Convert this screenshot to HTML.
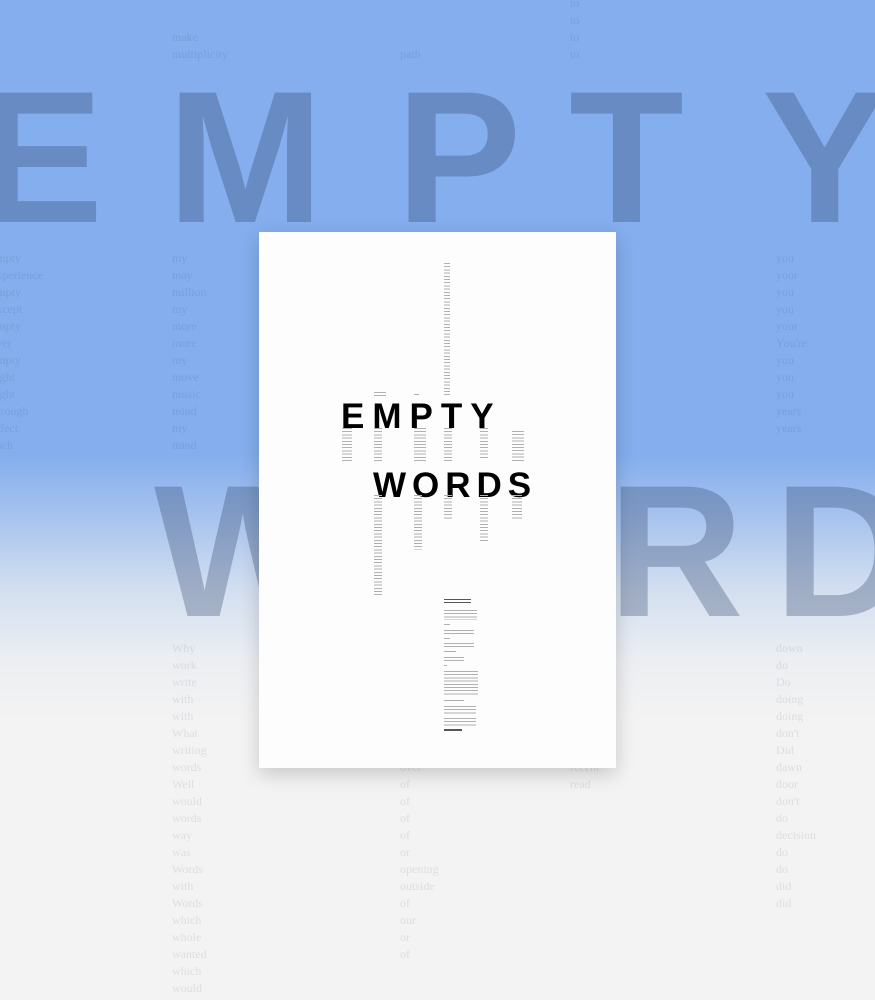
<!DOCTYPE html>
<html><head><meta charset="utf-8"><style>
*{margin:0;padding:0}
body{width:875px;height:1000px;overflow:hidden;position:relative;
background:linear-gradient(#84aeed 0,#84aeed 455px,#a9c4ee 520px,#d3dff0 590px,#eceef2 660px,#f3f3f3 720px,#f3f3f3 1000px);
font-family:"Liberation Serif",serif}
.big{position:absolute;font-family:"Liberation Sans",sans-serif;font-weight:bold;font-size:188px;line-height:1;color:rgba(40,60,100,0.3)}
.c{position:absolute;font-size:12px;line-height:17px;color:rgba(20,30,60,0.1);white-space:pre}
.poster{position:absolute;left:259px;top:232px;width:357px;height:536px;background:#fdfdfd;box-shadow:0 6px 18px rgba(0,0,0,0.18)}
.t{position:absolute;font-family:"Liberation Sans",sans-serif;font-weight:bold;font-size:35px;line-height:1;color:#000;letter-spacing:8px}
.l{position:absolute;background:repeating-linear-gradient(#b0b0b0 0,#b0b0b0 1px,transparent 1px,transparent 3.2px)}
</style></head><body>
<div class="big" style="left:-22px;top:63px">E</div>
<div class="big" style="left:167px;top:63px">M</div>
<div class="big" style="left:396px;top:63px">P</div>
<div class="big" style="left:569px;top:63px">T</div>
<div class="big" style="left:762px;top:63px">Y</div>
<div class="big" style="left:154px;top:457px">W</div>
<div class="big" style="left:380px;top:457px">O</div>
<div class="big" style="left:608px;top:457px">R</div>
<div class="big" style="left:774px;top:457px">D</div>

<div class="c" style="left:172px;top:29px">make
multiplicity</div>
<div class="c" style="left:400px;top:46px">path</div>
<div class="c" style="left:570px;top:-5px">to
to
to
to</div>
<div class="c" style="left:-9px;top:250px">empty
experience
empty
except
empty
ever
empty
eight
eight
through
effect
each</div>
<div class="c" style="left:172px;top:250px">my
may
million
my
more
more
my
move
music
mind
my
mind</div>
<div class="c" style="left:776px;top:250px">you
your
you
you
your
You're
you
you
you
years
years</div>
<div class="c" style="left:172px;top:640px">Why
work
write
with
with
What
writing
words
Well
would
words
way
was
Words
with
Words
which
whole
wanted
which
would</div>
<div class="c" style="left:400px;top:759px">over
of
of
of
of
or
opening
outside
of
our
or
of</div>
<div class="c" style="left:570px;top:759px">recent
read</div>
<div class="c" style="left:776px;top:640px">down
do
Do
doing
doing
don't
Did
dawn
door
don't
do
decision
do
do
did
did</div>

<div class="poster">
<div class="l" style="left:185px;top:31px;width:6px;height:133px"></div>
<div class="l" style="left:115px;top:160px;width:12px;height:5px"></div>
<div class="l" style="left:155px;top:162px;width:5px;height:3px"></div>
<div class="t" style="left:82px;top:167px">EMPTY</div>
<div class="l" style="left:83px;top:196px;width:10px;height:35px"></div>
<div class="l" style="left:115px;top:196px;width:8px;height:35px"></div>
<div class="l" style="left:155px;top:196px;width:12px;height:35px"></div>
<div class="l" style="left:185px;top:196px;width:8px;height:35px"></div>
<div class="l" style="left:221px;top:196px;width:8px;height:32px"></div>
<div class="l" style="left:253px;top:199px;width:12px;height:32px"></div>
<div class="t" style="left:114px;top:236px;letter-spacing:6px">WORDS</div>
<div class="l" style="left:115px;top:263px;width:8px;height:100px"></div>
<div class="l" style="left:155px;top:263px;width:8px;height:55px"></div>
<div class="l" style="left:185px;top:263px;width:8px;height:25px"></div>
<div class="l" style="left:221px;top:263px;width:8px;height:46px"></div>
<div class="l" style="left:253px;top:263px;width:10px;height:25px"></div>
<div class="l" style="left:185px;top:367px;width:27px;height:6px;background:repeating-linear-gradient(#555 0,#555 1px,transparent 1px,transparent 3px)"></div>
<div class="l" style="left:185px;top:378px;width:33px;height:10px"></div>
<div class="l" style="left:185px;top:392px;width:6px;height:2px"></div>
<div class="l" style="left:185px;top:398px;width:30px;height:5px"></div>
<div class="l" style="left:185px;top:406px;width:6px;height:2px"></div>
<div class="l" style="left:185px;top:411px;width:30px;height:5px"></div>
<div class="l" style="left:185px;top:419px;width:12px;height:2px"></div>
<div class="l" style="left:185px;top:425px;width:20px;height:5px"></div>
<div class="l" style="left:185px;top:433px;width:3px;height:2px"></div>
<div class="l" style="left:185px;top:439px;width:34px;height:25px"></div>
<div class="l" style="left:185px;top:468px;width:20px;height:2px"></div>
<div class="l" style="left:185px;top:474px;width:32px;height:8px"></div>
<div class="l" style="left:185px;top:486px;width:32px;height:8px"></div>
<div class="l" style="left:185px;top:497px;width:18px;height:2px;background:#555"></div>
</div>
</body></html>
